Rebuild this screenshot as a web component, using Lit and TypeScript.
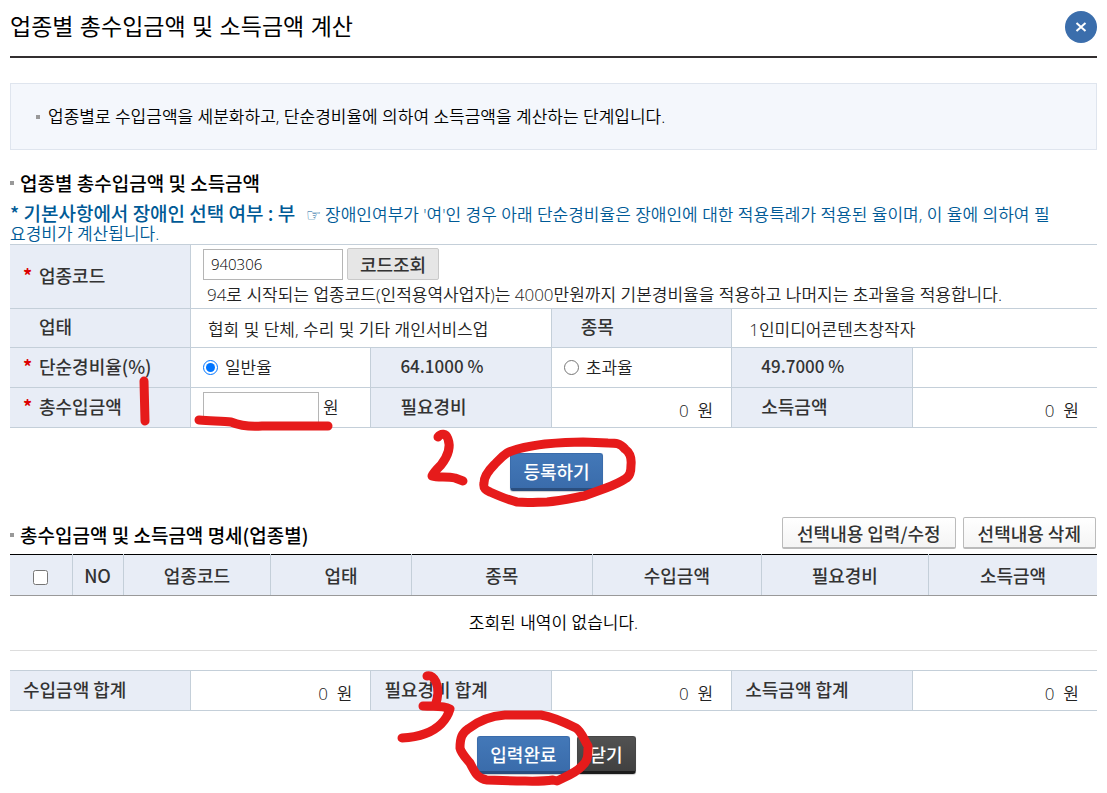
import { LitElement, html, css, svg } from "lit";
import { customElement, state } from "lit/decorators.js";

const detailColumns = [
  { label: "NO", width: 4.7 },
  { label: "업종코드", width: 13.6 },
  { label: "업태", width: 12.9 },
  { label: "종목", width: 16.7 },
  { label: "수입금액", width: 15.5 },
  { label: "필요경비", width: 15.4 },
  { label: "소득금액", width: 15.5 },
];

const marks = [
  "M144 381L145 421",
  "M199 420C212 421 224 421 231 422C241 426 250 427 262 426L328 426",
  "M438 437C441 433 446 433 448 439C451 447 448 456 441 465C436 470 433 473 432 476C438 478 447 476 455 478L463 481",
  "M608 443L583 442C568 442 556 443 545 444C529 446 515 449 507 453C501 457 498 461 494 465C487 472 484 478 484 483C483 488 485 490 490 492C499 496 508 500 517 502C528 503 538 502 547 502C560 501 573 498 584 496L606 488C614 485 619 483 625 479C630 476 631 472 631 465C632 456 629 452 625 449C620 443 616 443 608 443Z",
  "M427 676C432 675 434 678 436 682C439 689 438 698 435 706L423 706C434 707 442 705 450 709C448 716 446 719 441 724C433 732 420 737 402 738",
  "M505 715L541 715C553 717 564 722 576 728C582 732 584 740 588 746C588 756 588 761 582 766C576 773 565 777 557 781L553 780C540 782 528 781 517 781L487 780C478 779 475 773 470 763C465 757 461 753 460 748C460 738 462 733 468 729C478 721 490 716 505 715Z",
];

@customElement("app-root")
export class AppRoot extends LitElement {
  static styles = css`
    :host {
      --strong-face: "Noto Sans CJK KR", sans-serif;
      display: block;
      position: relative;
      background: #fff;
      color: #222;
      font-family: "Open Sans", "Noto Sans CJK KR", sans-serif;
      font-size: 17px;
      font-weight: 350;
      line-height: 20px;
    }
    * { box-sizing: border-box; }
    .page { padding: 0 10px 20px; }
    .top {
      display: flex;
      align-items: center;
      justify-content: space-between;
      height: 58px;
      padding-bottom: 2px;
      border-bottom: 2px solid #332f30;
    }
    h1 {
      margin: 0;
      color: #000;
      font-family: "Liberation Sans", "Noto Sans CJK KR", sans-serif;
      font-size: 23px;
      line-height: 30px;
      font-weight: 400;
    }
    button { font: inherit; cursor: pointer; white-space: nowrap; }
    .close {
      display: grid;
      place-items: center;
      width: 32px;
      height: 32px;
      padding: 0;
      border: 0;
      border-radius: 50%;
      background: #3b6eac;
    }
    .notice {
      margin: 25px 0 0;
      padding: 22px 25px;
      border: 1px solid #dfe5ee;
      background: #f4f7fc;
      color: #000;
      list-style: none;
    }
    .notice li { display: flex; align-items: center; gap: 8px; line-height: 21px; }
    .notice li::before { content: ""; flex: none; width: 4px; height: 4px; background: #999; }
    h2 {
      display: flex;
      align-items: center;
      gap: 6px;
      margin: 0;
      color: #000;
      font-family: var(--strong-face);
      font-size: 19px;
      line-height: 22px;
      font-weight: 500;
    }
    h2::before { content: ""; flex: none; width: 4px; height: 4px; background: #999; }
    .basic { margin-top: 22px; }
    .note { margin: 11px 0 0; padding: 0 32px 1px 0; color: #005a96; line-height: 19px; }
    .note strong { font-family: var(--strong-face); font-size: 19px; font-weight: 500; line-height: 1px; }
    .hand { margin-left: 6px; font-family: "DejaVu Sans", sans-serif; line-height: 1px; }
    table { width: 100%; border-collapse: collapse; table-layout: fixed; }
    .sixth { width: 16.6%; }
    .form th, .form td { height: 40px; padding: 0 12px; border: 1px solid #c4cfd9; text-align: left; }
    .form th {
      padding: 0 0 4px 29px;
      background: #e8edf6;
      color: #333;
      font-family: var(--strong-face);
      font-size: 18px;
      font-weight: 500;
    }
    .form tr > :first-child { border-left: 0; }
    .form tr > :last-child { border-right: 0; }
    .form .figure { font-size: 17px; }
    .form .text { padding: 4px 17px 0; }
    .form .low { height: 39px; }
    .form .code { padding: 3px 12px 0; }
    .form .amount { padding: 6px 18px 0; text-align: right; }
    .form.totals th { padding-left: 13px; }
    .required::before {
      content: "*";
      display: inline-block;
      width: 16px;
      margin-left: -16px;
      color: #d00;
      font-weight: bold;
    }
    .line { display: flex; align-items: center; gap: 4px; }
    .hint { padding: 5px 4px 3px; line-height: 20px; }
    input[type="text"] {
      height: 31px;
      padding: 0 7px;
      border: 1px solid #b5b5b5;
      border-radius: 0;
      background: #fff;
      color: #000;
      font: inherit;
      font-size: 15px;
    }
    .code-box { width: 140px; }
    .money-box { width: 116px; }
    .choice { display: flex; align-items: center; gap: 6px; }
    input[type="radio"] { width: 15px; height: 15px; margin: 0 1px 0 0; accent-color: #0075ff; }
    input[type="checkbox"] { width: 15px; height: 15px; margin: 0; vertical-align: middle; }
    .lookup, .solid, .plain {
      color: #333;
      font-family: var(--strong-face);
      font-size: 18px;
      font-weight: 500;
    }
    .lookup {
      height: 32px;
      padding: 0 12px;
      border: 1px solid #c9c9c9;
      border-radius: 2px;
      background: #e6e6e6;
    }
    .actions { display: flex; justify-content: center; gap: 7px; }
    .register, .finish { margin-top: 25px; padding-left: 6px; }
    .solid {
      height: 38px;
      padding: 0 12px;
      border: 1px solid #3a6cab;
      border-bottom: 3px solid #2a4e7e;
      border-radius: 3px;
      background: linear-gradient(#4378b8, #3a6cab);
      box-shadow: 0 1px 1px #0003;
      color: #fff;
    }
    .dark { border-color: #464646; border-bottom-color: #1c1c1c; background: linear-gradient(#525252, #414141); }
    .detail-head {
      display: flex;
      align-items: center;
      justify-content: space-between;
      margin-top: 26px;
      padding-right: 1px;
      height: 32px;
    }
    .detail-head h2 { padding-top: 3px; }
    .tools { display: flex; gap: 7px; }
    .plain {
      height: 32px;
      padding: 0 14px;
      border: 1px solid #bbb;
      border-bottom-width: 2px;
      border-radius: 2px;
      background: linear-gradient(#fff, #f4f4f4);
    }
    .detail { margin-top: 5px; border-top: 1px solid #000; }
    .detail th {
      height: 41px;
      padding: 0;
      border-bottom: 1px solid #999;
      border-left: 1px solid #c4cfd9;
      background: #e8edf6;
      color: #333;
      font-family: var(--strong-face);
      font-size: 18px;
      font-weight: 500;
    }
    .detail th:first-child { border-left: 0; }
    .detail td { height: 55px; padding: 0; border-bottom: 1px solid #ddd; color: #000; text-align: center; }
    .totals { margin-top: 19px; }
    .marks {
      position: absolute;
      top: 0;
      left: 0;
      width: 100%;
      fill: none;
      stroke: #e61b1b;
      stroke-width: 9;
      stroke-linecap: round;
      stroke-linejoin: round;
      pointer-events: none;
    }
  `;

  @state() private rate = "general";

  private sixths() {
    return html`<colgroup>
      <col class="sixth"><col class="sixth"><col class="sixth"><col class="sixth"><col class="sixth"><col>
    </colgroup>`;
  }

  render() {
    return html`
      <main class="page">
        <header class="top">
          <h1>업종별 총수입금액 및 소득금액 계산</h1>
          <button class="close" aria-label="닫기">
            <svg width="12" height="12" viewBox="0 0 12 12"><path d="M1.5 2L10.500 10M10.500 2L1.500 10" stroke="#fff" stroke-width="2"/></svg>
          </button>
        </header>
        <ul class="notice">
          <li>업종별로 수입금액을 세분화하고, 단순경비율에 의하여 소득금액을 계산하는 단계입니다.</li>
        </ul>
        <h2 class="basic">업종별 총수입금액 및 소득금액</h2>
        <p class="note"><strong>* 기본사항에서 장애인 선택 여부 : 부</strong> <span class="hand">☞</span> 장애인여부가 '여'인 경우 아래 단순경비율은 장애인에 대한 적용특례가 적용된 율이며, 이 율에 의하여 필요경비가 계산됩니다.</p>
        <table class="form">
          ${this.sixths()}
          <tbody>
            <tr>
              <th scope="row"><label class="required" for="code">업종코드</label></th>
              <td class="code" colspan="5">
                <div class="line">
                  <input class="code-box" id="code" type="text" value="940306">
                  <button class="lookup">코드조회</button>
                </div>
                <div class="hint">94로 시작되는 업종코드(인적용역사업자)는 4000만원까지 기본경비율을 적용하고 나머지는 초과율을 적용합니다.</div>
              </td>
            </tr>
            <tr>
              <th class="low" scope="row">업태</th>
              <td class="text low" colspan="2">협회 및 단체, 수리 및 기타 개인서비스업</td>
              <th class="low" scope="row">종목</th>
              <td class="text low" colspan="2">1인미디어콘텐츠창작자</td>
            </tr>
            <tr>
              <th scope="row"><span class="required">단순경비율(%)</span></th>
              <td><label class="choice"><input type="radio" name="rate" .checked=${this.rate === "general"} @change=${() => (this.rate = "general")}>일반율</label></td>
              <th class="figure">64.1000 %</th>
              <td><label class="choice"><input type="radio" name="rate" .checked=${this.rate === "excess"} @change=${() => (this.rate = "excess")}>초과율</label></td>
              <th class="figure">49.7000 %</th>
              <td></td>
            </tr>
            <tr>
              <th scope="row"><label class="required" for="income">총수입금액</label></th>
              <td><div class="line"><input class="money-box" id="income" type="text">원</div></td>
              <th scope="row">필요경비</th>
              <td class="amount">0&nbsp; 원</td>
              <th scope="row">소득금액</th>
              <td class="amount">0&nbsp; 원</td>
            </tr>
          </tbody>
        </table>
        <div class="actions register"><button class="solid">등록하기</button></div>

        <div class="detail-head">
          <h2>총수입금액 및 소득금액 명세(업종별)</h2>
          <div class="tools">
            <button class="plain">선택내용 입력/수정</button>
            <button class="plain">선택내용 삭제</button>
          </div>
        </div>
        <table class="detail">
          <colgroup>
            <col>
            ${detailColumns.map((c) => html`<col style="width:${c.width}%">`)}
          </colgroup>
          <thead>
            <tr>
              <th><input type="checkbox" aria-label="전체 선택"></th>
              ${detailColumns.map((c) => html`<th scope="col">${c.label}</th>`)}
            </tr>
          </thead>
          <tbody>
            <tr><td colspan="8">조회된 내역이 없습니다.</td></tr>
          </tbody>
        </table>
        <table class="form totals">
          ${this.sixths()}
          <tbody>
            <tr>
              <th scope="row">수입금액 합계</th>
              <td class="amount">0&nbsp; 원</td>
              <th scope="row">필요경비 합계</th>
              <td class="amount">0&nbsp; 원</td>
              <th scope="row">소득금액 합계</th>
              <td class="amount">0&nbsp; 원</td>
            </tr>
          </tbody>
        </table>
        <div class="actions finish">
          <button class="solid">입력완료</button>
          <button class="solid dark">닫기</button>
        </div>
      </main>
      <svg class="marks" viewBox="0 0 1107 793" aria-hidden="true">
        ${marks.map((d) => svg`<path d=${d} />`)}
      </svg>
    `;
  }
}
